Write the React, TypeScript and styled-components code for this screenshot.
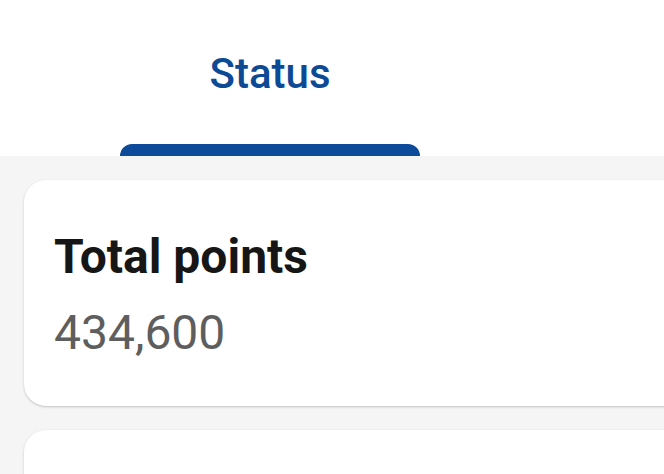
import styled, { createGlobalStyle } from 'styled-components';

const GlobalStyle = createGlobalStyle`
  html, body {
    margin: 0;
    padding: 0;
    background: #f5f5f5;
    font-family: Roboto, "Liberation Sans", Arial, sans-serif;
    overflow: hidden;
  }
`;

const Page = styled.div`
  width: 664px;
  height: 474px;
  overflow: hidden;
  background: #f5f5f5;
`;

const TabBar = styled.div`
  height: 156px;
  background: #ffffff;
  display: flex;
`;

const Tab = styled.div`
  flex: 0 0 540px;
  display: flex;
  flex-direction: column;
  align-items: center;
`;

const TabLabel = styled.span<{ $active?: boolean }>`
  margin-top: 48px;
  font-size: 42px;
  font-weight: 500;
  line-height: 52px;
  color: ${(p) => (p.$active ? '#0d4a96' : '#6b6b6b')};
`;

const TabIndicator = styled.div`
  margin-top: auto;
  width: 300px;
  height: 12px;
  background: #0d4a9a;
  border-radius: 12px 12px 0 0;
`;

const List = styled.div`
  display: flex;
  flex-direction: column;
  gap: 24px;
  padding: 24px 0 0 24px;
`;

const Card = styled.div`
  width: 700px;
  min-height: 226px;
  box-sizing: border-box;
  background: #ffffff;
  border-radius: 22px;
  box-shadow: 0 1px 3px rgba(0, 0, 0, 0.16), 0 1px 1px rgba(0, 0, 0, 0.06);
  padding: 49px 30px 30px;
  display: flex;
  flex-direction: column;
  gap: 20px;
`;

const CardTitle = styled.h3`
  margin: 0;
  font-size: 48px;
  font-weight: 700;
  line-height: 56px;
  color: #161616;
`;

const CardValue = styled.span`
  font-size: 48px;
  font-weight: 400;
  line-height: 56px;
  color: #5e5e5e;
`;

const App = () => {
  return (
    <Page>
      <GlobalStyle />
      <TabBar>
        <Tab>
          <TabLabel $active>Status</TabLabel>
          <TabIndicator />
        </Tab>
      </TabBar>
      <List>
        <Card>
          <CardTitle>Total points</CardTitle>
          <CardValue>434,600</CardValue>
        </Card>
        <Card />
      </List>
    </Page>
  );
};

export default App;
